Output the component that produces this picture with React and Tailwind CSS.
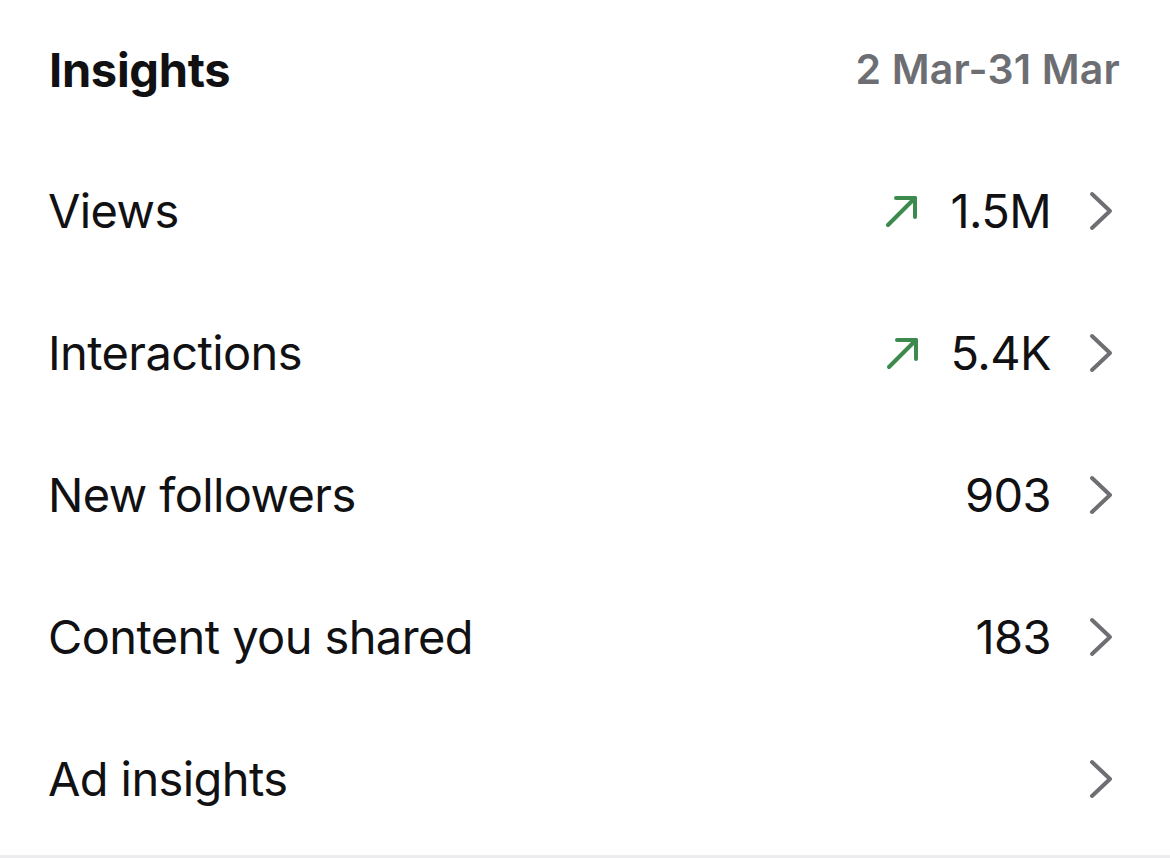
import React from 'react';

const rows = [
  { label: 'Views', value: '1.5M', up: true },
  { label: 'Interactions', value: '5.4K', up: true },
  { label: 'New followers', value: '903' },
  { label: 'Content you shared', value: '183' },
  { label: 'Ad insights' },
];

function TrendUp() {
  return (
    <svg width="36" height="36" viewBox="0 0 36 36" fill="none" stroke="#3d8a4e" strokeWidth="4" strokeLinecap="round" strokeLinejoin="round">
      <path d="M4 32 L31 5" />
      <path d="M12 5 H31 V24" />
    </svg>
  );
}

function Chevron() {
  return (
    <svg width="28" height="40" viewBox="0 0 28 40" fill="none" stroke="#6e6e73" strokeWidth="4" strokeLinecap="round" strokeLinejoin="round">
      <path d="M4 3 L22 20 L4 37" />
    </svg>
  );
}

export default function App() {
  return (
    <div className="w-[1170px] h-[858px] bg-white flex flex-col font-['Inter',sans-serif] text-[#111113]">
      <div className="flex items-center justify-between pl-[49px] pr-[50px] h-[140px]">
        <h1 className="text-[47px] font-bold tracking-[-0.3px]">Insights</h1>
        <span className="text-[41px] font-semibold text-[#6c6e73] tracking-[0.2px]">2 Mar-31 Mar</span>
      </div>
      <div className="flex flex-col flex-1">
        {rows.map((row) => (
          <div key={row.label} className="flex items-center h-[142px] pl-[48px] pr-[54px]">
            <span className="flex-1 text-[47px] tracking-[-0.6px]">{row.label}</span>
            <div className="flex items-center">
              {row.up && <span className="mr-[30px]"><TrendUp /></span>}
              {row.value && <span className="text-[47px] tracking-[-0.6px]">{row.value}</span>}
              <span className="ml-[37px]"><Chevron /></span>
            </div>
          </div>
        ))}
      </div>
      <div className="h-[3px] bg-[#ececee]" />
    </div>
  );
}
